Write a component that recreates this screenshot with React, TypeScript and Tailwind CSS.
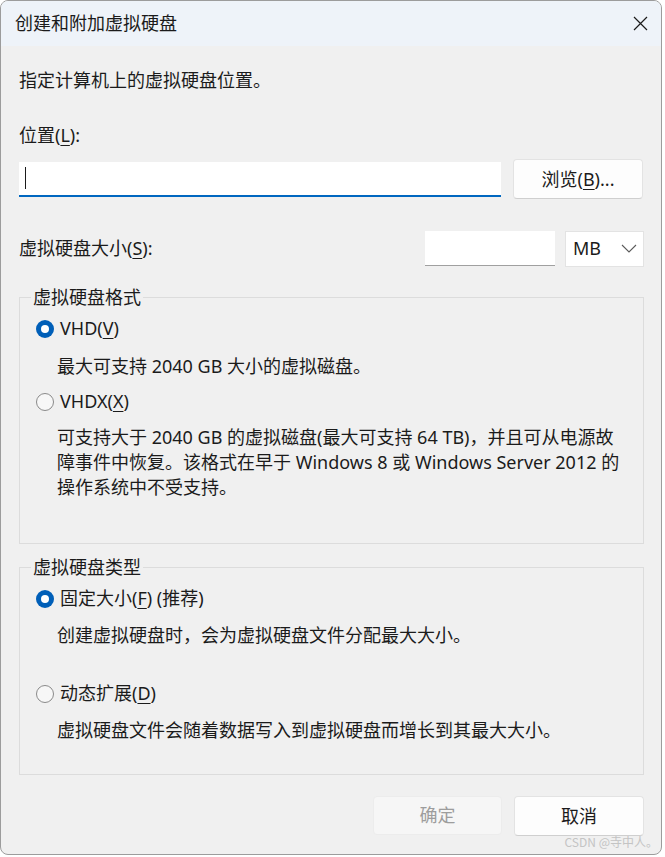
import React from "react";

const font = "font-['Noto_Sans','Noto_Sans_CJK_SC',sans-serif]";

function Radio({ checked }: { checked: boolean }) {
  if (checked) {
    return (
      <span className="w-[18px] h-[18px] rounded-full bg-[#005fb8] flex items-center justify-center shrink-0">
        <span className="w-[8px] h-[8px] rounded-full bg-white" />
      </span>
    );
  }
  return <span className="w-[18px] h-[18px] rounded-full border border-[#8a8a8a] bg-[#f7f7f7] shrink-0" />;
}

function U({ children }: { children: React.ReactNode }) {
  return <span className="underline underline-offset-[3px] decoration-1">{children}</span>;
}

function Option({ checked, label, children, descTop = "mt-[13px]" }: { checked: boolean; label: React.ReactNode; children: React.ReactNode; descTop?: string }) {
  return (
    <div>
      <div className="flex items-center gap-[6px] h-[25px]">
        <Radio checked={checked} />
        <span>{label}</span>
      </div>
      <p className={`pl-[21px] ${descTop}`}>{children}</p>
    </div>
  );
}

export default function App() {
  return (
    <div className={`w-[665px] h-[857px] bg-white ${font} text-[18px] leading-[25px] text-[#1b1b1b]`}>
      <div className="relative w-[662px] h-[855px] rounded-[8px] border border-[#9c9c9c] overflow-hidden flex flex-col bg-[#f0f0f0]">
        {/* Title bar */}
        <div className="h-[45px] bg-[#eef3f9] flex items-center justify-between pl-[14px] pr-[13px] shrink-0">
          <span>创建和附加虚拟硬盘</span>
          <svg width="15" height="15" viewBox="0 0 15 15" fill="none" stroke="#1b1b1b" strokeWidth="1.2">
            <path d="M1 1 L14 14 M14 1 L1 14" />
          </svg>
        </div>

        {/* Body */}
        <div className="pl-[18px] w-[643px] flex flex-col">
          <p className="mt-[22px]">指定计算机上的虚拟硬盘位置。</p>
          <p className="mt-[30px]">
            位置(<U>L</U>):
          </p>

          <div className="mt-[11px] flex items-center gap-[12px]">
            <div className="w-[482px] h-[35px] bg-white border-b-2 border-[#0067c0] flex items-center pl-[6px]">
              <span className="w-px h-[22px] bg-[#1b1b1b]" />
            </div>
            <button className="w-[130px] h-[40px] bg-[#fdfdfd] border border-[#e3e3e3] border-b-[#cfcfcf] rounded-[4px]">
              浏览(<U>B</U>)...
            </button>
          </div>

          <div className="mt-[32px] flex items-center h-[35px]">
            <span className="flex-1">
              虚拟硬盘大小(<U>S</U>):
            </span>
            <div className="w-[130px] h-[35px] bg-white border-b border-[#a0a0a0]" />
            <div className="ml-[10px] w-[79px] h-[36px] bg-white border border-[#e3e3e3] flex items-center justify-between pl-[7px] pr-[6px]">
              <span>MB</span>
              <svg width="16" height="9" viewBox="0 0 16 9" fill="none" stroke="#5c5c5c" strokeWidth="1.1">
                <path d="M1 1 L8 8 L15 1" />
              </svg>
            </div>
          </div>

          <fieldset className="mt-[19px] w-[625px] h-[259px] border border-[#dcdcdc] p-0">
            <legend className="ml-[11px] px-[2px]">虚拟硬盘格式</legend>
            <div className="pl-[16px] pr-[20px] mt-[6px] flex flex-col gap-[10px]">
              <Option checked label={<>VHD(<U>V</U>)</>}>
                最大可支持 2040 GB 大小的虚拟磁盘。
              </Option>
              <Option checked={false} label={<>VHDX(<U>X</U>)</>} descTop="mt-[11px]">
                可支持大于 2040 GB 的虚拟磁盘(最大可支持 64 TB)，并且可从电源故障事件中恢复。该格式在早于 Windows 8 或 Windows Server 2012 的操作系统中不受支持。
              </Option>
            </div>
          </fieldset>

          <fieldset className="mt-[11px] w-[625px] h-[220px] border border-[#dcdcdc] p-0">
            <legend className="ml-[11px] px-[2px]">虚拟硬盘类型</legend>
            <div className="pl-[16px] pr-[20px] mt-[6px] flex flex-col gap-[33px]">
              <Option checked label={<>固定大小(<U>F</U>) (推荐)</>} descTop="mt-[12px]">
                创建虚拟硬盘时，会为虚拟硬盘文件分配最大大小。
              </Option>
              <Option checked={false} label={<>动态扩展(<U>D</U>)</>} descTop="mt-[12px]">
                虚拟硬盘文件会随着数据写入到虚拟硬盘而增长到其最大大小。
              </Option>
            </div>
          </fieldset>

          <div className="mt-[21px] flex justify-end gap-[12px] w-[625px]">
            <button className="w-[129px] h-[39px] bg-[#f6f6f6] border border-[#ececec] rounded-[4px] text-[#9d9d9d]">
              确定
            </button>
            <button className="w-[130px] h-[40px] bg-[#fdfdfd] border border-[#e3e3e3] border-b-[#cfcfcf] rounded-[4px]">
              取消
            </button>
          </div>
        </div>

        <span className="absolute right-[3px] bottom-[5px] text-[12px] leading-[14px] text-[#c4c4c4] font-['Noto_Sans_CJK_SC',sans-serif]">
          CSDN @寺中人。
        </span>
      </div>
    </div>
  );
}
